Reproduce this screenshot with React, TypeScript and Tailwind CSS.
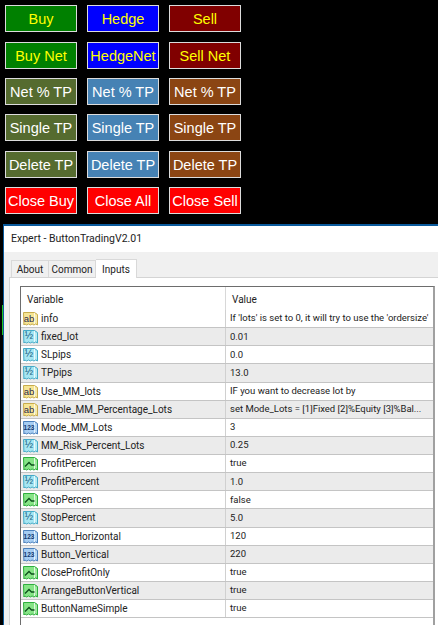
const FONT = "font-['Liberation_Sans',Arial,sans-serif]";
const SMALL = "font-['Roboto','Liberation_Sans',sans-serif]";

type Btn = { t: string; bg: string; fg: string };
const buttons: Btn[] = [
  { t: "Buy", bg: "bg-[#008000]", fg: "text-[#ffff00]" },
  { t: "Hedge", bg: "bg-[#0000ff]", fg: "text-[#ffff00]" },
  { t: "Sell", bg: "bg-[#800000]", fg: "text-[#ffff00]" },
  { t: "Buy Net", bg: "bg-[#008000]", fg: "text-[#ffff00]" },
  { t: "HedgeNet", bg: "bg-[#0000ff]", fg: "text-[#ffff00]" },
  { t: "Sell Net", bg: "bg-[#800000]", fg: "text-[#ffff00]" },
  { t: "Net % TP", bg: "bg-[#556b2f]", fg: "text-white" },
  { t: "Net % TP", bg: "bg-[#4682b4]", fg: "text-white" },
  { t: "Net % TP", bg: "bg-[#8b4513]", fg: "text-white" },
  { t: "Single TP", bg: "bg-[#556b2f]", fg: "text-white" },
  { t: "Single TP", bg: "bg-[#4682b4]", fg: "text-white" },
  { t: "Single TP", bg: "bg-[#8b4513]", fg: "text-white" },
  { t: "Delete TP", bg: "bg-[#556b2f]", fg: "text-white" },
  { t: "Delete TP", bg: "bg-[#4682b4]", fg: "text-white" },
  { t: "Delete TP", bg: "bg-[#8b4513]", fg: "text-white" },
  { t: "Close Buy", bg: "bg-[#ff0000]", fg: "text-white" },
  { t: "Close All", bg: "bg-[#ff0000]", fg: "text-white" },
  { t: "Close Sell", bg: "bg-[#ff0000]", fg: "text-white" },
];

type Kind = "ab" | "v2" | "123" | "bool";
const rows: [Kind, string, string][] = [
  ["ab", "info", "If 'lots' is set to 0, it will try to use the 'ordersize'"],
  ["v2", "fixed_lot", "0.01"],
  ["v2", "SLpips", "0.0"],
  ["v2", "TPpips", "13.0"],
  ["ab", "Use_MM_lots", "IF you want to decrease lot by"],
  ["ab", "Enable_MM_Percentage_Lots", "set Mode_Lots = [1]Fixed [2]%Equity [3]%Bal..."],
  ["123", "Mode_MM_Lots", "3"],
  ["v2", "MM_Risk_Percent_Lots", "0.25"],
  ["bool", "ProfitPercen", "true"],
  ["v2", "ProfitPercent", "1.0"],
  ["bool", "StopPercen", "false"],
  ["v2", "StopPercent", "5.0"],
  ["123", "Button_Horizontal", "120"],
  ["123", "Button_Vertical", "220"],
  ["bool", "CloseProfitOnly", "true"],
  ["bool", "ArrangeButtonVertical", "true"],
  ["bool", "ButtonNameSimple", "true"],
];

function TypeIcon({ kind }: { kind: Kind }) {
  const palette = {
    ab: { fill: "#f6e594", stroke: "#c8ac4c", ink: "#2c2a50" },
    v2: { fill: "#a6e6f2", stroke: "#45abc8", ink: "#12587a" },
    "123": { fill: "#a6cdf2", stroke: "#4a80bc", ink: "#123a70" },
    bool: { fill: "#86e486", stroke: "#2eae3e", ink: "#0b4f1b" },
  }[kind];
  const label = kind === "ab" ? "ab" : kind === "v2" ? "½" : kind === "123" ? "123" : "";
  return (
    <svg width="15" height="15" viewBox="0 0 15 15" className="shrink-0">
      <path
        d="M.5 1.5h11l3 2v10.5l-1.8-1-1.8 1-1.8-1-1.8 1-1.8-1-1.8 1-1.8-1-1 1z"
        fill={palette.fill}
        stroke={palette.stroke}
      />
      <path d="M11.5 2v11" stroke="#ffffff" strokeOpacity="0.75" />
      <path d="M13 4v8" stroke="#ffffff" strokeOpacity="0.4" />
      {kind === "bool" ? (
        <path d="M2 10.5 6 6.5 8.5 9h3" fill="none" stroke={palette.ink} strokeWidth="1.3" />
      ) : (
        <text
          x="6"
          y={kind === "ab" ? 10.5 : 10}
          textAnchor="middle"
          fontSize={kind === "123" ? 6.5 : kind === "v2" ? 10 : 9.5}
          fontWeight={kind === "123" ? 700 : 400}
          fill={palette.ink}
          fontFamily="Liberation Sans"
        >
          {label}
        </text>
      )}
    </svg>
  );
}

export default function App() {
  return (
    <div className={`${FONT} relative w-[438px] h-[625px] overflow-hidden bg-black flex flex-col`}>
      <div className="grid grid-cols-[72px_72px_72px] grid-rows-[37px_36px_36px_37px_36px_27px] gap-x-[10px] pt-[5px] pl-[5px] h-[224px] content-start">
        {buttons.map((b, i) => (
          <div
            key={i}
            className={`${b.bg} ${b.fg} h-[27px] border border-[#dcdcdc] flex items-center justify-center pt-px text-[14.5px] leading-none whitespace-nowrap`}
          >
            {b.t}
          </div>
        ))}
      </div>

      <div className="absolute left-[2px] top-[305px] h-[30px] w-px bg-[#22c322]" />

      <div className={`${SMALL} flex-1 ml-[3px] border-l border-t-2 border-[#0a5a9c] bg-white flex flex-col min-h-0`}>
        <div className="h-[26px] flex items-center pl-[7px] text-[10.5px] text-[#222]">
          Expert - ButtonTradingV2.01
        </div>
        <div className="flex-1 bg-[#f0f0f0] flex flex-col min-h-0 pl-[5px]">
          <div className="h-[25px] flex items-end text-[10px] text-[#222]">
            <div className="h-[17px] w-[38px] flex items-center justify-center border border-b-0 border-[#d9d9d9] ml-[2px]">About</div>
            <div className="h-[17px] w-[47px] flex items-center justify-center border border-b-0 border-l-0 border-[#d9d9d9]">Common</div>
            <div className="h-[19px] w-[41px] flex items-center justify-center border border-b-0 border-l-0 border-[#d9d9d9] bg-white relative top-px">Inputs</div>
          </div>
          <div className="flex-1 bg-white border-t border-l border-[#d4d4d4] pt-[8px] pl-[10px] min-h-0">
            <div className="w-[415px] h-[400px] border-t border-l border-[#6d6d6d] border-r-2 border-r-[#a0a0a0] text-[10px] text-[#222]">
              <div className="h-[23px] flex items-center">
                <div className="w-[205px] shrink-0 pl-[6px] pt-[2px] border-r border-[#d8d8d8] h-full flex items-center">Variable</div>
                <div className="pl-[6px] pt-[2px]">Value</div>
              </div>
              {rows.map(([k, name, value], i) => (
                <div
                  key={i}
                  className={`h-[18.13px] flex items-center border-b border-[#c4c4c4] ${i % 2 === 1 ? "bg-[#ebebeb]" : "bg-white"}`}
                >
                  <div className="w-[205px] shrink-0 h-full flex items-center gap-[3px] pl-[2px] border-r border-[#d0d0d0]">
                    <TypeIcon kind={k} />
                    <span className="whitespace-nowrap">{name}</span>
                  </div>
                  <div className="pl-[4px] whitespace-nowrap text-[9.5px]">{value}</div>
                </div>
              ))}
            </div>
          </div>
        </div>
      </div>
    </div>
  );
}
